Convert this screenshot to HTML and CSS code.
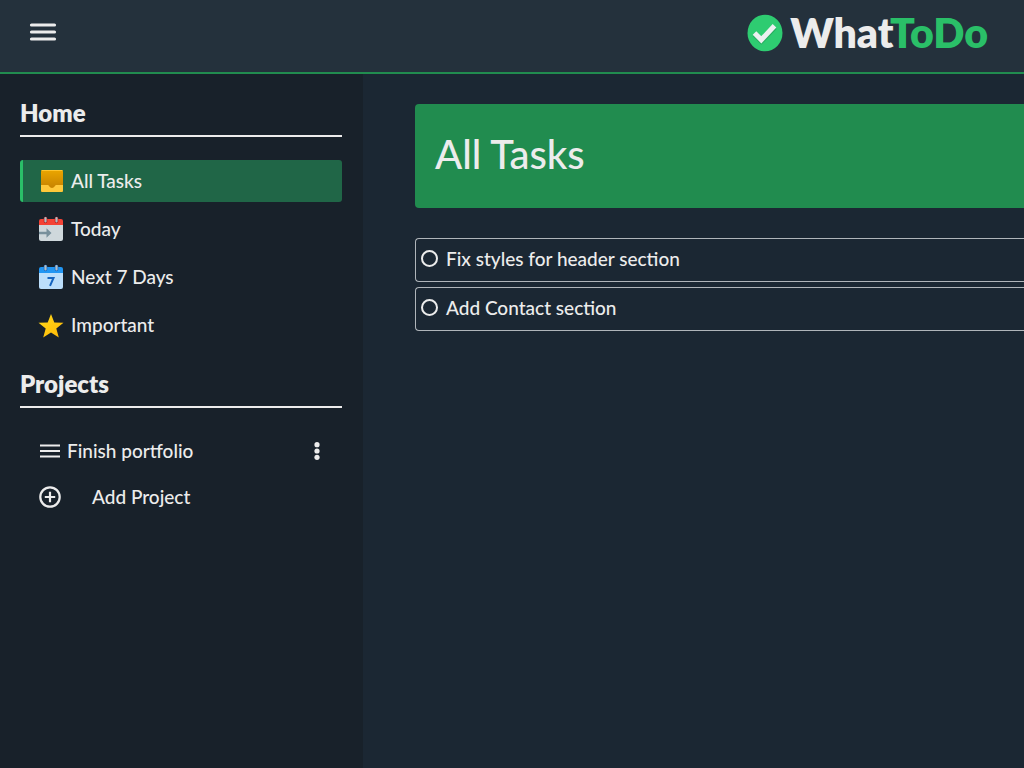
FILE: index.html
```html
<!DOCTYPE html>
<html lang="en">
<head>
<meta charset="utf-8">
<meta name="viewport" content="width=device-width, initial-scale=1">
<title>WhatToDo</title>
<link rel="stylesheet" href="styles.css">
</head>
<body>
<header class="header">
  <button class="menu-button" type="button" aria-label="Toggle menu">
    <svg width="26" height="18" viewBox="0 0 26 18" aria-hidden="true"><path d="M1.500 2h23M1.500 9h23M1.500 16h23" fill="none" stroke="currentColor" stroke-width="3.200" stroke-linecap="round"/></svg>
  </button>
  <div class="logo">
    <svg class="logo-mark" width="36" height="38" viewBox="0 0 36 38" aria-hidden="true"><ellipse cx="18" cy="19" rx="17.500" ry="18.300" fill="#2ecc71"/><path d="M7.500 20.500l6.800 6.800 13.500-14" fill="none" stroke="#28ad61" stroke-width="5"/><path d="M7.500 19l6.800 6.800 13.200-14" fill="none" stroke="#ecf0f1" stroke-width="5"/></svg>
    <h1 class="logo-text">What<span class="logo-accent">ToDo</span></h1>
  </div>
</header>
<div class="layout">
  <aside class="sidebar">
    <h2 class="section-title">Home</h2>
    <nav class="nav-list" aria-label="Home">
      <button class="nav-item nav-item-active" type="button">
        <svg width="24" height="24" viewBox="0 0 24 24" aria-hidden="true"><defs><linearGradient id="tray" x1="0" y1="0" x2="0" y2="1"><stop offset="0" stop-color="#eba600"/><stop offset=".75" stop-color="#c98500"/></linearGradient></defs><rect x="2" y="1" width="22" height="22" rx="1.500" fill="url(#tray)"/><path d="M2 16h7c1 0 1.500 3 4 3s3-3 4-3h7v5.500a1.500 1.500 0 0 1-1.500 1.500h-19A1.500 1.500 0 0 1 2 21.500z" fill="#ffc83a"/><path d="M2.500 1.500h21" stroke="#ffc52e" fill="none"/></svg>
        <span>All Tasks</span>
      </button>
      <button class="nav-item" type="button">
        <svg width="24" height="24" viewBox="0 0 24 24" aria-hidden="true"><path d="M0 8h24v14a2 2 0 0 1-2 2H2a2 2 0 0 1-2-2z" fill="#cfd8dc"/><path d="M0 8V4a2 2 0 0 1 2-2h20a2 2 0 0 1 2 2v4z" fill="#f44336"/><path d="M6.500 1.500v3M17.500 1.500v3" stroke="#b71c1c" stroke-width="3.600" stroke-linecap="round"/><path d="M6.500 1v3.500M17.500 1v3.500" stroke="#b0bec5" stroke-width="2.200" stroke-linecap="round"/><path d="M0 14.800h7.500v-3.500l5 4.700-5 4.700v-3.500H0z" fill="#78909c"/></svg>
        <span>Today</span>
      </button>
      <button class="nav-item" type="button">
        <svg width="24" height="24" viewBox="0 0 24 24" aria-hidden="true"><path d="M0 8h24v14a2 2 0 0 1-2 2H2a2 2 0 0 1-2-2z" fill="#bbdefb"/><path d="M0 8V4a2 2 0 0 1 2-2h20a2 2 0 0 1 2 2v4z" fill="#2196f3"/><path d="M6.500 1.500v3M17.500 1.500v3" stroke="#1565c0" stroke-width="3.600" stroke-linecap="round"/><path d="M6.500 1v3.500M17.500 1v3.500" stroke="#b0bec5" stroke-width="2.200" stroke-linecap="round"/><path d="M8.500 13h6l-3.500 7.800" fill="none" stroke="#1565c0" stroke-width="2"/></svg>
        <span>Next 7 Days</span>
      </button>
      <button class="nav-item" type="button">
        <svg width="24" height="24" viewBox="0 0 24 24" aria-hidden="true"><defs><linearGradient id="star" x1="0" y1="0" x2="1" y2="1"><stop offset="0" stop-color="#ffda1c"/><stop offset="1" stop-color="#feb705"/></linearGradient></defs><path d="M12 1l3.300 8.500 9.200.3-7.200 5.700 2.500 9L12 19.500l-7.800 5L6.700 15.500-.5 9.800l9.200-.3z" fill="url(#star)"/></svg>
        <span>Important</span>
      </button>
    </nav>
    <h2 class="section-title">Projects</h2>
    <div class="project-list">
      <div class="project">
        <button class="project-name" type="button">
          <svg width="20" height="14" viewBox="0 0 20 14" aria-hidden="true"><path d="M0 1.500h20M0 7h20M0 12.500h20" fill="none" stroke="currentColor" stroke-width="2.200"/></svg>
          <span>Finish portfolio</span>
        </button>
        <button class="project-menu" type="button" aria-label="Project options">
          <svg width="6" height="18" viewBox="0 0 6 18" aria-hidden="true"><g fill="currentColor"><circle cx="3" cy="2.700" r="2.600"/><circle cx="3" cy="9" r="2.600"/><circle cx="3" cy="15.300" r="2.600"/></g></svg>
        </button>
      </div>
      <button class="add-project" type="button">
        <svg width="22" height="22" viewBox="0 0 22 22" aria-hidden="true"><circle cx="11" cy="11" r="9.700" fill="none" stroke="currentColor" stroke-width="2.200"/><path d="M11 5.800v10.400M5.800 11h10.400" stroke="currentColor" stroke-width="2.200"/></svg>
        <span>Add Project</span>
      </button>
    </div>
  </aside>
  <main class="content">
    <h2 class="banner">All Tasks</h2>
    <ul class="task-list">
      <li><label class="task"><input class="task-check" type="checkbox"><span>Fix styles for header section</span></label></li>
      <li><label class="task"><input class="task-check" type="checkbox"><span>Add Contact section</span></label></li>
    </ul>
  </main>
</div>
</body>
</html>
```

FILE: styles.css
```css
* {
  box-sizing: border-box;
}

body {
  margin: 0;
  min-height: 100vh;
  display: flex;
  flex-direction: column;
  background: #1b2733;
  color: #ececec;
  font-family: Lato, "Open Sans", sans-serif;
  font-size: 19px;
  font-weight: 500;
  line-height: 24px;
}

h1,
h2,
ul {
  margin: 0;
  padding: 0;
}

ul {
  list-style: none;
}

button {
  border: 0;
  padding: 0;
  background: none;
  color: inherit;
  font: inherit;
  text-align: left;
  cursor: pointer;
}

svg {
  display: block;
  flex: none;
  overflow: visible;
}

.header {
  display: flex;
  align-items: center;
  justify-content: space-between;
  padding: 10px 36px 16px 30px;
  background: #24313c;
  border-bottom: 2px solid #218c4f;
}

.menu-button {
  padding-bottom: 2px;
}

.logo {
  display: flex;
  align-items: center;
  gap: 7px;
}

.logo-text {
  font-size: 41px;
  line-height: 46px;
  font-weight: 800;
}

.logo-accent {
  color: #2abf68;
}

.layout {
  flex: 1;
  display: grid;
  grid-template-columns: 363px 1fr;
}

.sidebar {
  padding: 24px 21px 24px 20px;
  background: #18212a;
}

.section-title {
  padding-bottom: 7px;
  border-bottom: 2px solid #ececec;
  font-size: 24px;
  line-height: 30px;
  font-weight: 800;
}

.nav-list {
  display: flex;
  flex-direction: column;
  gap: 6px;
  padding: 23px 0;
}

.nav-item {
  display: flex;
  align-items: center;
  gap: 8px;
  height: 42px;
  padding-left: 16px;
  border-left: 3px solid transparent;
  border-radius: 3px;
}

.nav-item-active {
  background: #206647;
  border-left-color: #2abf68;
}

.project-list {
  display: flex;
  flex-direction: column;
  padding: 20px 20px 20px 19px;
}

.project {
  display: flex;
  align-items: center;
  justify-content: space-between;
  height: 46px;
}

.project-name {
  display: flex;
  align-items: center;
  gap: 7px;
  padding-left: 1px;
}

.project-menu {
  padding: 4px 2px;
}

.add-project {
  display: flex;
  align-items: center;
  gap: 31px;
  height: 46px;
}

.content {
  padding: 30px 0 30px 52px;
}

.banner {
  padding: 26px 20px 30px;
  border-radius: 4px 0 0 4px;
  background: #218c4f;
  font-size: 40px;
  line-height: 48px;
  font-weight: 500;
}

.task-list {
  display: flex;
  flex-direction: column;
  gap: 5px;
  padding-top: 30px;
}

.task {
  display: flex;
  align-items: center;
  gap: 8px;
  height: 44px;
  padding: 0 5px 3px;
  border: 1px solid #b0b5ba;
  border-right: 0;
  border-radius: 4px 0 0 4px;
}

.task-check {
  appearance: none;
  flex: none;
  width: 17px;
  height: 17px;
  margin: 0;
  border: 2px solid #ececec;
  border-radius: 50%;
}

.task-check:checked {
  background: #2abf68;
}
```
